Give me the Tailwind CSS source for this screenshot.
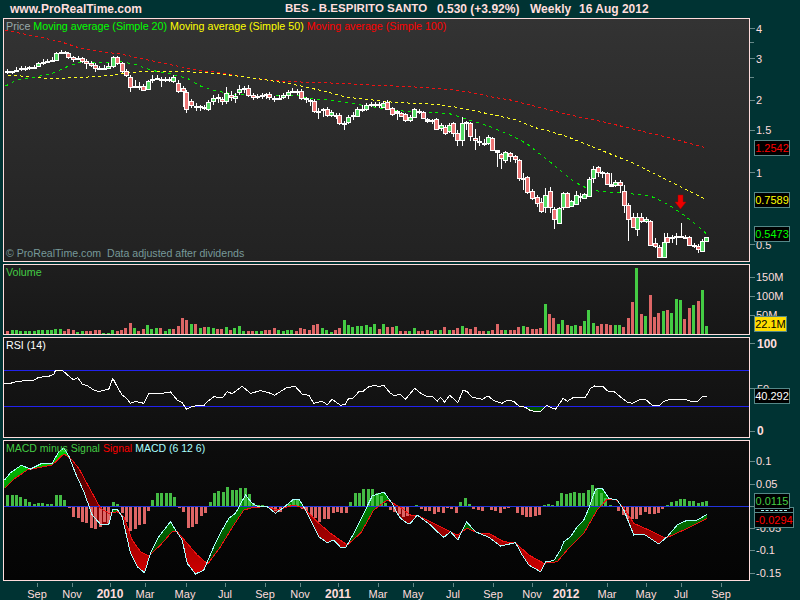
<!DOCTYPE html>
<html>
<head>
<meta charset="utf-8">
<script src="https://cdn.jsdelivr.net/npm/@tailwindcss/browser@4"></script>
</head>
<body class="w-[800px] h-[600px] overflow-hidden bg-[#003333] font-['Liberation_Sans',Arial,sans-serif] text-[#ffdddd]">
<header class="flex items-center h-[18px] pl-[10px] font-bold leading-none whitespace-pre">
  <span class="w-[275px] text-[12px]">www.ProRealTime.com</span>
  <span class="w-[152px] text-[11.5px]">BES - B.ESPIRITO SANTO</span>
  <span class="w-[93px] text-[12px]">0.530 (+3.92%)</span>
  <span class="w-[49px] text-[12px]">Weekly</span>
  <span class="text-[12px]">16 Aug 2012</span>
</header>
<main class="flex flex-col gap-[2px] pl-[3px]">
  <section class="flex h-[244px]">
    <div class="relative w-[747px] border border-[#ffdddd] bg-linear-to-b from-[#333333] to-[#222222]">
      <svg id="price" class="absolute -left-px -top-px" width="747" height="244" viewBox="3 18 747 244" shape-rendering="crispEdges"></svg>
      <div class="absolute left-[2px] top-[1px] flex gap-[3px] text-[10.7px] leading-[13px] whitespace-pre">
        <span class="text-[#99aaaa]">Price</span><span class="text-[#00ff00]">Moving average (Simple 20)</span><span class="text-[#ffff00]">Moving average (Simple 50)</span><span class="text-[#ff0000]">Moving average (Simple 100)</span>
      </div>
      <div class="absolute left-[2px] bottom-[1px] text-[10.6px] leading-[13px] text-[#779999] whitespace-pre">© ProRealTime.com  Data adjusted after dividends</div>
    </div>
    <svg class="w-[50px] h-[244px] text-[11px] fill-[#ffdddd] stroke-none" viewBox="750 18 50 244">
      <g class="stroke-[#668888]" shape-rendering="crispEdges">
        <path d="M750 28.5h5M750 42.5h4M750 58.5h5M750 77.5h4M750 100.5h5M750 130.5h5M750 172.5h5M750 244.5h5"/>
      </g>
      <text x="756" y="33">4</text><text x="756" y="63">3</text><text x="756" y="104">2</text><text x="756" y="134">1.5</text><text x="756" y="177">1</text><text x="756" y="249">0.5</text>
    </svg>
  </section>
  <section class="flex h-[71px]">
    <div class="relative w-[747px] border border-[#ffdddd] bg-linear-to-b from-[#1e1e1e] to-[#171717]">
      <svg id="volume" class="absolute -left-px -top-px" width="747" height="71" viewBox="3 264 747 71" shape-rendering="crispEdges"></svg>
      <span class="absolute left-[2px] top-[1px] text-[10.7px] leading-[13px] text-[#44cc44]">Volume</span>
    </div>
    <svg class="w-[50px] h-[71px] text-[11px] fill-[#ffdddd]" viewBox="750 264 50 71">
      <path class="stroke-[#668888]" shape-rendering="crispEdges" d="M750 277.5h5M750 296.5h5M750 315.5h5"/>
      <text x="756" y="281">150M</text><text x="756" y="300">100M</text><text x="756" y="319">50M</text>
    </svg>
  </section>
  <section class="flex h-[101px]">
    <div class="relative w-[747px] border border-[#ffdddd] bg-linear-to-b from-[#181818] to-[#0f0f0f]">
      <svg id="rsi" class="absolute -left-px -top-px" width="747" height="101" viewBox="3 337 747 101" shape-rendering="crispEdges"></svg>
      <span class="absolute left-[2px] top-[1px] text-[10.7px] leading-[13px] text-white">RSI (14)</span>
    </div>
    <svg class="w-[50px] h-[101px] text-[11px] fill-[#ffdddd]" viewBox="750 337 50 101">
      <path class="stroke-[#668888]" shape-rendering="crispEdges" d="M750 343.5h5M750 388.5h5M750 431.5h5"/>
      <text x="757" y="348" class="font-bold text-[12px]">100</text><text x="757" y="393">50</text><text x="757" y="435" class="font-bold text-[12px]">0</text>
    </svg>
  </section>
  <section class="flex h-[141px]">
    <div class="relative w-[747px] border border-[#ffdddd] bg-linear-to-b from-[#0d0d0d] to-[#040404]">
      <svg id="macd" class="absolute -left-px -top-px" width="747" height="141" viewBox="3 440 747 141" shape-rendering="crispEdges"></svg>
      <div class="absolute left-[2px] top-[1px] flex gap-[3px] text-[10.5px] leading-[13px] whitespace-pre">
        <span class="text-[#44cc44]">MACD minus Signal</span><span class="text-[#ff0000]">Signal</span><span class="text-[#aaffff]">MACD (6 12 6)</span>
      </div>
    </div>
    <svg class="w-[50px] h-[141px] text-[11px] fill-[#ffdddd]" viewBox="750 440 50 141">
      <path class="stroke-[#668888]" shape-rendering="crispEdges" d="M750 461.5h5M750 484.5h5M750 506.5h5M750 528.5h5M750 550.5h5M750 573.5h5"/>
      <text x="756" y="465">0.1</text><text x="756" y="488">0.05</text><text x="756" y="532">-0.05</text><text x="756" y="554">-0.1</text><text x="756" y="577">-0.15</text>
    </svg>
  </section>
  <svg class="w-[797px] h-[19px] text-[11px] fill-[#ffdddd]" viewBox="3 581 797 19" text-anchor="middle">
    <path class="stroke-[#668888]" shape-rendering="crispEdges" d="M37.5 581v4M72.5 581v4M110.5 581v4M145.5 581v4M186.5 581v4M225.5 581v4M265.5 581v4M300.5 581v4M338.5 581v4M378.5 581v4M413.5 581v4M453.5 581v4M493.5 581v4M532.5 581v4M566.5 581v4M607.5 581v4M646.5 581v4M681.5 581v4M721.5 581v4"/>
    <text x="37" y="596">Sep</text><text x="72" y="596">Nov</text><text x="110" y="596" class="font-bold text-[12px]">2010</text><text x="145" y="596">Mar</text><text x="185" y="596">May</text><text x="225" y="596">Jul</text><text x="265" y="596">Sep</text><text x="300" y="596">Nov</text><text x="338" y="596" class="font-bold text-[12px]">2011</text><text x="378" y="596">Mar</text><text x="413" y="596">May</text><text x="453" y="596">Jul</text><text x="493" y="596">Sep</text><text x="532" y="596">Nov</text><text x="566" y="596" class="font-bold text-[12px]">2012</text><text x="607" y="596">Mar</text><text x="646" y="596">May</text><text x="681" y="596">Jul</text><text x="721" y="596">Sep</text>
  </svg>
</main>

<!-- last-value tags lying over the axis -->
<span class="absolute left-[754px] top-[140px] w-[36px] h-[16px] border border-[#558888] bg-black text-[#ff0000] text-[11px] leading-[14px] text-center">1.2542</span>
<span class="absolute left-[754px] top-[192px] w-[36px] h-[16px] border border-[#558888] bg-black text-[#ffff00] text-[11px] leading-[14px] text-center">0.7589</span>
<span class="absolute left-[754px] top-[226px] w-[36px] h-[16px] border border-[#558888] bg-black text-[#00ff00] text-[11px] leading-[14px] text-center">0.5473</span>
<span class="absolute left-[754px] top-[316px] w-[33px] h-[16px] border border-[#558888] bg-[#ffdd00] text-black text-[11px] leading-[14px] text-center whitespace-nowrap">22.1M</span>
<span class="absolute left-[754px] top-[388px] w-[36px] h-[16px] border border-[#558888] bg-black text-white text-[11px] leading-[14px] text-center">40.292</span>
<span class="absolute left-[754px] top-[507px] w-[40px] h-[8px] border border-[#558888] bg-black"></span>
<span class="absolute left-[761px] top-[510px] w-[26px] h-[1px] border-t border-dashed border-[#aaffff]"></span>
<span class="absolute left-[754px] top-[493px] w-[36px] h-[16px] border border-[#558888] bg-black text-[#44cc44] text-[11px] leading-[14px] text-center">0.0115</span>
<span class="absolute left-[754px] top-[512px] w-[40px] h-[16px] border border-[#558888] bg-black text-[#ff0000] text-[11px] leading-[14px] text-center">-0.0294</span>

<script>
// All figures below are read from the picture at 3x: [x, y, ...]
var C=[[22,214,217,208,222,0],[35,214,216,212,222,0],[48,209,214,202,216,0],[62,203,205,198,212,0],[75,203,204,198,212,0],[88,202,204,198,210,0],[102,201,203,195,207,0],[115,190,199,186,201,1],[128,187,189,178,195,0],[142,183,185,178,190,0],[155,180,182,172,186,0],[168,160,180,155,182,1],[182,155,157,150,163,0],[195,156,158,152,163,0],[205,158,171,156,176,2],[220,172,177,168,186,2],[233,174,176,168,180,0],[245,173,184,170,190,2],[258,184,190,178,208,2],[272,188,196,184,200,2],[285,196,203,190,215,2],[298,203,205,198,210,0],[312,203,205,196,208,0],[325,197,203,190,208,1],[338,172,198,168,204,1],[350,172,190,168,194,2],[365,190,212,185,220,2],[378,212,226,208,232,2],[391,230,262,226,276,2],[404,257,259,240,264,0],[418,257,259,246,270,0],[430,258,270,252,274,2],[443,244,268,240,270,1],[456,236,238,226,248,0],[470,235,237,224,240,0],[483,237,239,232,262,0],[496,237,239,230,245,0],[508,237,239,232,245,0],[519,230,244,225,250,1],[535,248,274,240,280,2],[548,265,272,258,320,2],[558,275,328,270,338,2],[573,302,316,296,324,2],[587,319,321,310,332,0],[600,319,321,315,334,0],[612,321,323,315,330,0],[625,305,328,300,332,1],[640,294,304,286,316,1],[653,291,293,283,308,0],[665,296,303,290,315,2],[679,280,304,262,312,1],[692,284,292,272,302,2],[705,287,295,280,308,1],[718,268,277,254,285,1],[732,264,266,258,278,0],[745,263,284,254,292,2],[758,284,291,278,300,2],[771,288,290,282,298,0],[785,284,286,278,298,0],[798,283,285,278,296,0],[808,282,291,276,300,2],[822,293,295,288,306,1],[836,293,295,285,300,0],[850,284,292,278,298,1],[863,276,284,270,296,1],[877,272,274,265,280,0],[890,274,276,268,285,0],[903,274,294,268,300,2],[917,295,297,290,310,0],[930,299,301,296,318,0],[942,302,334,296,340,2],[955,333,335,325,358,0],[968,328,330,325,350,0],[980,328,345,322,352,2],[994,335,345,330,350,1],[1008,344,346,338,358,0],[1018,344,370,340,375,2],[1032,370,372,362,390,0],[1045,350,367,345,372,1],[1058,344,346,336,360,0],[1072,326,348,320,352,1],[1085,327,329,315,335,0],[1098,316,328,310,334,1],[1112,313,315,305,320,0],[1125,311,313,305,320,0],[1138,311,313,306,324,0],[1150,308,320,302,324,1],[1162,306,326,300,330,2],[1177,325,342,320,348,2],[1190,333,338,330,360,0],[1203,340,347,336,352,2],[1216,343,359,338,365,2],[1229,350,359,346,365,1],[1243,328,350,325,352,1],[1256,332,336,328,342,0],[1268,337,355,332,358,2],[1282,358,364,354,368,0],[1295,361,363,356,372,0],[1309,358,386,355,390,2],[1322,374,384,368,392,1],[1334,380,398,374,405,2],[1348,374,394,370,400,1],[1360,370,398,366,410,2],[1372,400,420,390,438,2],[1387,368,419,350,438,1],[1399,367,369,362,390,0],[1411,370,407,365,422,2],[1426,415,421,387,450,2],[1438,422,424,408,438,0],[1452,428,430,418,438,0],[1465,412,428,404,435,1],[1477,415,449,410,452,2],[1492,451,455,451,500,0],[1504,463,475,458,507,2],[1516,457,481,452,488,1],[1531,460,468,456,485,2],[1544,469,476,465,488,2],[1558,480,535,476,543,2],[1570,533,537,520,570,0],[1582,532,577,528,582,2],[1597,574,595,566,600,2],[1610,590,610,586,620,2],[1622,607,632,595,640,2],[1636,584,622,565,640,1],[1649,574,622,560,640,2],[1663,626,658,622,688,2],[1676,625,670,620,672,1],[1688,580,622,575,630,1],[1701,580,620,575,625,2],[1714,604,618,600,622,1],[1727,586,612,572,616,1],[1741,588,591,580,605,0],[1753,583,593,578,596,1],[1766,538,587,530,590,1],[1780,506,533,498,550,1],[1793,502,517,498,530,2],[1806,516,520,512,535,0],[1820,520,552,516,556,2],[1833,553,557,520,560,0],[1846,546,555,540,560,1],[1859,545,556,540,580,2],[1871,573,616,555,640,2],[1885,616,658,610,722,2],[1898,650,682,640,684,2],[1912,652,688,640,708,1],[1924,650,664,640,668,2],[1938,656,664,652,668,1],[1951,664,734,660,738,2],[1964,730,739,715,745,2],[1976,740,770,736,772,2],[1991,725,772,700,775,1],[2002,710,725,700,730,2],[2016,711,715,706,730,0],[2029,709,711,700,735,0],[2042,709,711,670,715,0],[2055,711,713,706,718,0],[2068,712,735,708,738,2],[2081,736,738,730,745,0],[2094,738,748,732,760,2],[2107,722,752,716,754,1],[2119,712,722,710,724,1]];
var RED=[[15,90],[60,100],[120,112],[180,125],[240,145],[300,155],[360,162],[420,175],[480,188],[540,200],[600,212],[660,218],[720,228],[780,238],[840,243],[900,246],[960,248],[1020,250],[1080,254],[1140,256],[1200,259],[1260,262],[1340,268],[1400,275],[1470,290],[1530,300],[1600,318],[1680,338],[1740,352],[1820,368],[1900,388],[2000,412],[2115,443]];
var YEL=[[22,225],[60,228],[100,232],[160,236],[220,233],[280,230],[340,226],[380,218],[440,214],[500,213],[560,215],[620,218],[680,224],[740,232],[800,240],[860,250],[920,262],[980,276],[1040,292],[1100,298],[1180,307],[1240,310],[1300,313],[1360,320],[1420,332],[1480,345],[1540,358],[1610,385],[1635,390],[1700,410],[1800,450],[1900,490],[2000,540],[2115,598]];
var GRN=[[15,258],[50,240],[100,232],[150,222],[200,200],[240,187],[300,187],[360,185],[400,192],[450,210],[510,222],[560,235],[600,258],[640,272],[700,282],[760,288],[820,288],[880,285],[930,295],[980,300],[1040,308],[1100,318],[1145,325],[1180,330],[1240,337],[1300,336],[1350,342],[1400,358],[1470,380],[1540,410],[1580,432],[1650,487],[1720,545],[1760,565],[1800,575],[1880,580],[1950,588],[2000,612],[2050,645],[2100,685],[2118,702]];
var VOL=[-8,12,12,9,9,9,9,12,12,12,12,15,15,-9,-15,-12,6,9,-9,-9,-12,-12,3,3,12,-9,-12,-18,-33,18,-9,-15,27,15,18,-18,9,15,-15,-24,-48,-42,30,-30,18,-21,21,18,-15,-15,21,-12,18,24,9,-9,-9,9,9,-12,-12,-18,12,9,12,12,-9,-18,-15,-12,-27,-30,18,12,6,-12,-18,42,27,21,24,24,27,21,30,-15,30,-21,-21,24,-9,-9,9,18,-9,-9,-12,9,-12,12,-21,12,-12,-18,24,-18,-15,-21,-9,-9,9,-12,-30,-12,12,-12,-12,-21,24,-21,-15,-15,-18,90,-60,-48,30,42,-27,24,27,-24,39,72,33,-24,-30,-30,-27,27,27,-21,-48,-96,198,-60,54,-117,-51,-63,69,-72,63,105,102,-45,-78,87,-99,132,24];
var HIS=[32,32,32,28,22,12,5,10,10,5,5,32,32,18,-6,-32,-35,-48,-52,-65,-68,-62,-48,-50,12,5,-22,-48,-75,-68,-58,-55,-15,18,38,38,40,40,28,-6,-18,-65,-62,-55,-30,-20,12,38,46,42,58,47,47,55,55,35,10,3,3,-3,-8,-15,-18,-3,5,18,18,-10,-15,-30,-35,-48,-38,-38,-20,-18,-22,-22,12,38,38,52,52,50,40,30,10,-12,-18,-25,-32,-30,-3,3,-8,-15,-15,-25,-18,-22,-6,-10,-22,12,25,6,-10,-12,-16,-2,-12,-16,-22,-10,-6,-3,-20,-28,-34,-34,-30,-28,3,6,3,16,38,35,38,42,40,38,48,63,55,40,25,3,-3,-15,-28,-38,-38,-38,-28,-18,-25,-25,-22,-8,3,12,16,20,20,16,14,10,12,16];
var RSI=[[12,371],[30,370],[50,364],[100,361],[115,352],[145,349],[160,343],[165,331],[185,331],[205,348],[218,359],[232,353],[245,372],[262,378],[280,390],[295,395],[325,387],[337,355],[350,380],[365,405],[375,412],[390,430],[405,424],[430,430],[445,400],[470,402],[510,396],[530,420],[545,428],[558,448],[572,440],[590,437],[610,437],[620,425],[640,410],[665,414],[680,395],[695,401],[725,379],[750,400],[780,392],[805,398],[822,406],[860,382],[885,380],[905,402],[925,406],[940,430],[965,424],[980,434],[995,418],[1020,436],[1035,432],[1045,414],[1058,414],[1075,395],[1085,396],[1105,380],[1125,376],[1135,380],[1150,376],[1170,400],[1180,406],[1200,404],[1215,418],[1242,385],[1265,403],[1280,410],[1295,408],[1310,424],[1320,412],[1332,426],[1348,406],[1372,428],[1388,390],[1400,395],[1415,412],[1445,418],[1463,408],[1480,422],[1505,430],[1520,420],[1540,424],[1555,438],[1575,442],[1590,452],[1618,456],[1638,436],[1650,442],[1665,448],[1688,415],[1700,424],[1720,412],[1755,412],[1770,385],[1782,378],[1808,380],[1825,396],[1840,394],[1865,415],[1880,426],[1895,430],[1915,420],[1935,418],[1955,436],[1975,438],[1990,424],[2010,418],[2055,418],[2070,424],[2090,426],[2105,410],[2120,409]];
var MAC=[[12,150],[30,128],[62,106],[90,117],[120,102],[155,100],[175,65],[190,54],[205,78],[225,130],[250,185],[275,255],[300,283],[325,283],[337,238],[350,238],[365,260],[390,370],[410,410],[432,428],[450,370],[475,320],[510,275],[525,300],[545,330],[560,400],[585,432],[610,420],[640,350],[665,300],[685,265],[705,250],[735,195],[755,220],[770,228],[800,230],[825,250],[850,232],[880,207],[895,207],[915,240],[940,290],[955,320],[980,338],[1000,330],[1020,352],[1035,354],[1060,310],[1090,250],[1115,198],[1150,186],[1175,220],[1190,250],[1200,265],[1220,280],[1230,280],[1250,255],[1290,285],[1310,305],[1330,322],[1350,305],[1372,330],[1398,275],[1425,305],[1465,322],[1500,348],[1545,338],[1565,375],[1585,405],[1620,425],[1635,395],[1660,392],[1680,360],[1690,335],[1710,320],[1730,290],[1750,270],[1765,235],[1785,178],[1805,175],[1825,205],[1850,210],[1870,240],[1900,315],[1930,312],[1975,342],[2000,320],[2030,285],[2055,273],[2090,270],[2120,253]];
var SIG=[[12,175],[40,148],[80,120],[120,112],[155,105],[190,72],[210,85],[235,115],[270,180],[300,235],[325,250],[350,245],[370,260],[395,330],[420,365],[445,378],[480,345],[515,305],[530,305],[560,340],[590,375],[622,402],[660,350],[700,285],[730,240],[760,232],[800,230],[830,240],[880,225],[910,235],[950,275],[990,310],[1040,345],[1080,310],[1120,240],[1160,210],[1200,232],[1230,255],[1250,255],[1290,275],[1330,295],[1370,315],[1400,295],[1435,310],[1465,310],[1510,335],[1545,338],[1585,375],[1630,400],[1670,395],[1700,360],[1750,310],[1790,240],[1820,208],[1845,208],[1870,235],[1900,280],[1940,298],[1995,325],[2050,300],[2080,285],[2120,265]];

function line(p,dy){return p.map(function(q,i){return (i?'L':'M')+(q[0]/3+.5).toFixed(1)+' '+((q[1]+(dy||0))/3).toFixed(1)}).join('')}
function rect(x,y,w,h){return 'M'+x+' '+y+'h'+w+'v'+h+'h'+(-w)+'z'}
function at(p,x){for(var i=1;i<p.length;i++){if(x<=p[i][0]){return p[i-1][1]+(p[i][1]-p[i-1][1])*(x-p[i-1][0])/(p[i][0]-p[i-1][0])}}return p[p.length-1][1]}
function bars(v,base,s){var g='',r='';v.forEach(function(h,i){var x=Math.round(7.3+i*699/(v.length-1))-1,a=Math.round(Math.abs(h)/3)||1,y=h>0||s?base-a:base;if(h>0){g+=rect(x,y,3,a)}else{r+=rect(x,y,3,a)}});return [g,r]}

// price
var w='',up='',dn='',white='';
C.forEach(function(c){var x=Math.round(c[0]/3),t=Math.round(c[1]/3),b=Math.round(c[2]/3),ht=Math.round(c[3]/3),lo=Math.round(c[4]/3);
  w+=rect(x,ht,1,Math.max(lo-ht,1));
  w+=rect(x-2,t,5,Math.max(b-t,1)+1);
  if(c[5]&&b-t>1){var f=rect(x-1,t+1,3,b-t-1);if(c[5]==1){up+=f}else{dn+=f}}
});
document.getElementById('price').innerHTML=
 '<path d="'+line(RED)+'" fill="none" stroke="#ee1111" stroke-dasharray="3 3"/>'+
 '<path d="'+line(YEL)+'" fill="none" stroke="#ffff22" stroke-dasharray="3 3"/>'+
 '<path d="'+line(GRN)+'" fill="none" stroke="#00ee00" stroke-dasharray="3 4"/>'+
 '<path d="'+w+'" fill="#fff"/><path d="'+up+'" fill="#55dd66"/><path d="'+dn+'" fill="#ee7777"/>'+
 '<path d="M678 195h5v7h3l-5.500 7l-5.500-7h3z" fill="#ee0000" stroke="#aa0000" stroke-width=".5" shape-rendering="auto"/>';

// volume
var v=bars(VOL,334,true);
document.getElementById('volume').innerHTML='<path d="'+v[0]+'" fill="#44cc44"/><path d="'+v[1]+'" fill="#dd6666"/>';

// rsi
var x,zone='';
for(x=1555;x<1640;x+=3){var yy=at(RSI,x)+780;if(yy>1219){zone+='M'+Math.round(x/3)+' 406V'+(yy/3).toFixed(1)}}
document.getElementById('rsi').innerHTML=
 '<path d="'+zone+'" stroke="#005500" fill="none"/>'+
 '<path d="M4 370.500H749M4 406.500H749" stroke="#2222ee"/>'+
 '<path d="'+line(RSI,780)+'" fill="none" stroke="#fff"/>';

// macd
var gf='',rf='';
for(x=12;x<=2120;x+=3){var m=at(MAC,x),s=at(SIG,x),d='M'+(Math.round(x/3)+.5)+' '+((m+1290)/3).toFixed(1)+'V'+((s+1290)/3).toFixed(1);if(m<s){gf+=d}else{rf+=d}}
var h=bars(HIS,506,false);
document.getElementById('macd').innerHTML=
 '<defs><linearGradient id="gg" gradientUnits="userSpaceOnUse" x1="0" y1="450" x2="0" y2="560"><stop offset="0" stop-color="#00d000"/><stop offset="1" stop-color="#003a00"/></linearGradient>'+
 '<linearGradient id="rg" gradientUnits="userSpaceOnUse" x1="0" y1="460" x2="0" y2="575"><stop offset="0" stop-color="#400000"/><stop offset="1" stop-color="#d00000"/></linearGradient></defs>'+
 '<path d="'+gf+'" stroke="url(#gg)" fill="none"/><path d="'+rf+'" stroke="url(#rg)" fill="none"/>'+
 '<path d="'+h[0]+'" fill="#44bb44"/><path d="'+h[1]+'" fill="#dd6666"/>'+
 '<path d="M4 506.500H749" stroke="#2233dd"/>'+
 '<path d="'+line(SIG,1290)+'" fill="none" stroke="#ee1111"/>'+
 '<path d="'+line(MAC,1290)+'" fill="none" stroke="#aaffff"/>';
</script>
</body>
</html>
